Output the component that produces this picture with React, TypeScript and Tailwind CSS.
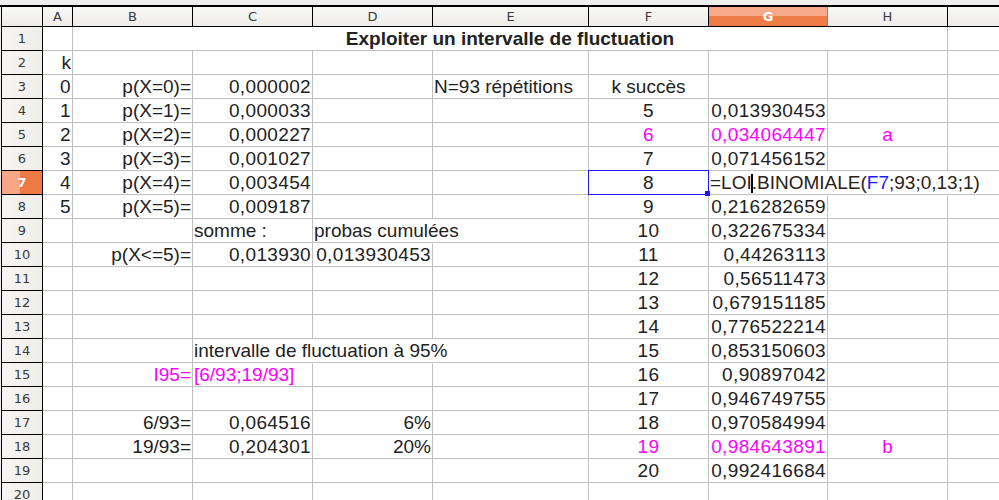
type Cell = { v: string; a?: 'l' | 'r' | 'c'; m?: boolean; open?: boolean }

// column widths incl. right grid line
const cols = [
  { id: 'A', w: 'w-[30px]' },
  { id: 'B', w: 'w-[120px]' },
  { id: 'C', w: 'w-[120px]' },
  { id: 'D', w: 'w-[120px]' },
  { id: 'E', w: 'w-[156px]' },
  { id: 'F', w: 'w-[120px]' },
  { id: 'G', w: 'w-[119px]' },
  { id: 'H', w: 'w-[120px]' },
]

const r = (v: string, m?: boolean): Cell => ({ v, a: 'r', m })
const c = (v: string, m?: boolean): Cell => ({ v, a: 'c', m })
const l = (v: string, m?: boolean, open?: boolean): Cell => ({ v, a: 'l', m, open })

const rows: Record<number, Partial<Record<string, Cell>>> = {
  2: { A: r('k') },
  3: { A: r('0'), B: r('p(X=0)='), C: r('0,000002'), E: l('N=93 répétitions'), F: c('k succès') },
  4: { A: r('1'), B: r('p(X=1)='), C: r('0,000033'), F: c('5'), G: r('0,013930453') },
  5: { A: r('2'), B: r('p(X=2)='), C: r('0,000227'), F: c('6', true), G: r('0,034064447', true), H: c('a', true) },
  6: { A: r('3'), B: r('p(X=3)='), C: r('0,001027'), F: c('7'), G: r('0,071456152') },
  7: { A: r('4'), B: r('p(X=4)='), C: r('0,003454'), F: c('8') },
  8: { A: r('5'), B: r('p(X=5)='), C: r('0,009187'), F: c('9'), G: r('0,216282659') },
  9: { C: l('somme :'), D: l('probas cumulées', false, true), F: c('10'), G: r('0,322675334') },
  10: { B: r('p(X<=5)='), C: r('0,013930'), D: r('0,013930453'), F: c('11'), G: r('0,44263113') },
  11: { F: c('12'), G: r('0,56511473') },
  12: { F: c('13'), G: r('0,679151185') },
  13: { F: c('14'), G: r('0,776522214') },
  14: { C: l('intervalle de fluctuation à 95%', false, true), D: { v: '', open: true }, F: c('15'), G: r('0,853150603') },
  15: { B: r('I95=', true), C: l('[6/93;19/93]', true), F: c('16'), G: r('0,90897042') },
  16: { F: c('17'), G: r('0,946749755') },
  17: { B: r('6/93='), C: r('0,064516'), D: r('6%'), F: c('18'), G: r('0,970584994') },
  18: { B: r('19/93='), C: r('0,204301'), D: r('20%'), F: c('19', true), G: r('0,984643891', true), H: c('b', true) },
  19: { F: c('20'), G: r('0,992416684') },
}

const font = "font-['Liberation_Sans',Arial,sans-serif]"
const uiFont = "font-['DejaVu_Sans',sans-serif]"

function GridCell({ w, cell }: { w: string; cell?: Cell }) {
  const align =
    cell?.a === 'r' ? 'justify-end' : cell?.a === 'c' ? 'justify-center' : 'justify-start'
  // numbers are drawn a touch wider in the original
  const numeric = cell ? /^[0-9,]+$/.test(cell.v) : false
  return (
    <div
      className={`${w} h-full shrink-0 flex items-end ${align} px-[1px] border-b border-[#c0c0c0] ${
        cell?.open ? 'border-r border-r-transparent' : 'border-r'
      }`}
    >
      {cell?.v ? (
        <span
          className={`whitespace-nowrap leading-[22px] ${numeric ? 'tracking-[0.35px]' : ''} ${
            cell.m ? 'text-[#ff00ff]' : 'text-[#222]'
          }`}
        >
          {cell.v}
        </span>
      ) : null}
    </div>
  )
}

function RowHead({ n, active }: { n: number; active?: boolean }) {
  return (
    <div
      className={`w-[42px] shrink-0 h-full flex items-center justify-center border-l border-r border-b border-black text-[13px] ${uiFont} ${
        active
          ? 'bg-[linear-gradient(to_right,#f6a886_45%,#ef7a46_45%)] text-white font-bold'
          : 'bg-[linear-gradient(to_right,#f7f6f4,#eeede9)] text-[#3a3a3a]'
      }`}
    >
      {n}
    </div>
  )
}

export default function App() {
  return (
    <div className={`w-[999px] h-[500px] overflow-hidden bg-white ${font} text-[19px]`}>
      <div className="h-[5px] bg-[#efefef]" />
      <div className="h-[2px] bg-black" />
      {/* column headers */}
      <div className={`flex h-[20px] ${uiFont} text-[13px] text-[#3a3a3a]`}>
        <div className="w-[1px] shrink-0 bg-[#efefef]" />
        <div className="w-[42px] shrink-0 border-l border-r border-b border-black bg-[linear-gradient(to_bottom,#f8f8f6,#edece9)]" />
        {cols.map((col) =>
          col.id === 'G' ? (
            <div
              key={col.id}
              className={`${col.w} shrink-0 flex items-center justify-center border-r border-b border-r-[#e06a36] border-b-black bg-[linear-gradient(to_bottom,#f6aa8b_50%,#ef7b46_50%)] text-white font-bold`}
            >
              G
            </div>
          ) : (
            <div
              key={col.id}
              className={`${col.w} shrink-0 flex items-center justify-center border-r border-b border-black bg-[linear-gradient(to_bottom,#f8f8f6,#edece9)]`}
            >
              {col.id}
            </div>
          )
        )}
        <div className="flex-1 border-b border-black bg-[linear-gradient(to_bottom,#f8f8f6,#edece9)]" />
      </div>

      <div className="relative">
        {/* row 1 with merged title */}
        <div className="flex h-[24px]">
          <div className="w-[1px] shrink-0 bg-[#efefef]" />
          <RowHead n={1} />
          <GridCell w="w-[30px]" />
          <div className="w-[875px] shrink-0 h-full flex items-end justify-center border-r border-b border-[#c0c0c0]">
            <span className="leading-[22px] font-bold text-[#222] whitespace-nowrap">
              Exploiter un intervalle de fluctuation
            </span>
          </div>
          <div className="flex-1 border-b border-[#c0c0c0]" />
        </div>

        {Array.from({ length: 19 }, (_, i) => i + 2).map((n) => (
          <div key={n} className="flex h-[24px]">
            <div className="w-[1px] shrink-0 bg-[#efefef]" />
            <RowHead n={n} active={n === 7} />
            {cols.map((col) => {
              if (n === 7 && col.id === 'G') {
                return (
                  <div
                    key={col.id}
                    className={`${col.w} shrink-0 h-full flex items-end px-[1px] border-b border-r border-[#c0c0c0] border-r-transparent`}
                  >
                    <span className="whitespace-nowrap leading-[22px] text-[#2a2118]">
                      =LOI
                      <span className="inline-block w-[2px] h-[19px] bg-black align-[-4px] mx-[-1px]" />
                      .BINOMIALE(<span className="text-[#1c1cff]">F7</span>;93;0,13;1)
                    </span>
                  </div>
                )
              }
              if (n === 7 && col.id === 'H') {
                return (
                  <div
                    key={col.id}
                    className={`${col.w} shrink-0 h-full border-b border-r border-[#c0c0c0] border-r-transparent`}
                  />
                )
              }
              return <GridCell key={col.id} w={col.w} cell={rows[n]?.[col.id]} />
            })}
            <div className="flex-1 border-b border-[#c0c0c0]" />
          </div>
        ))}

        {/* reference highlight on F7 */}
        <div className="absolute left-[588px] top-[143px] w-[121px] h-[25px] border border-[#1a1aff]" />
        <div className="absolute left-[705px] top-[164px] w-[5px] h-[5px] bg-[#1a1aff]" />
      </div>
    </div>
  )
}
